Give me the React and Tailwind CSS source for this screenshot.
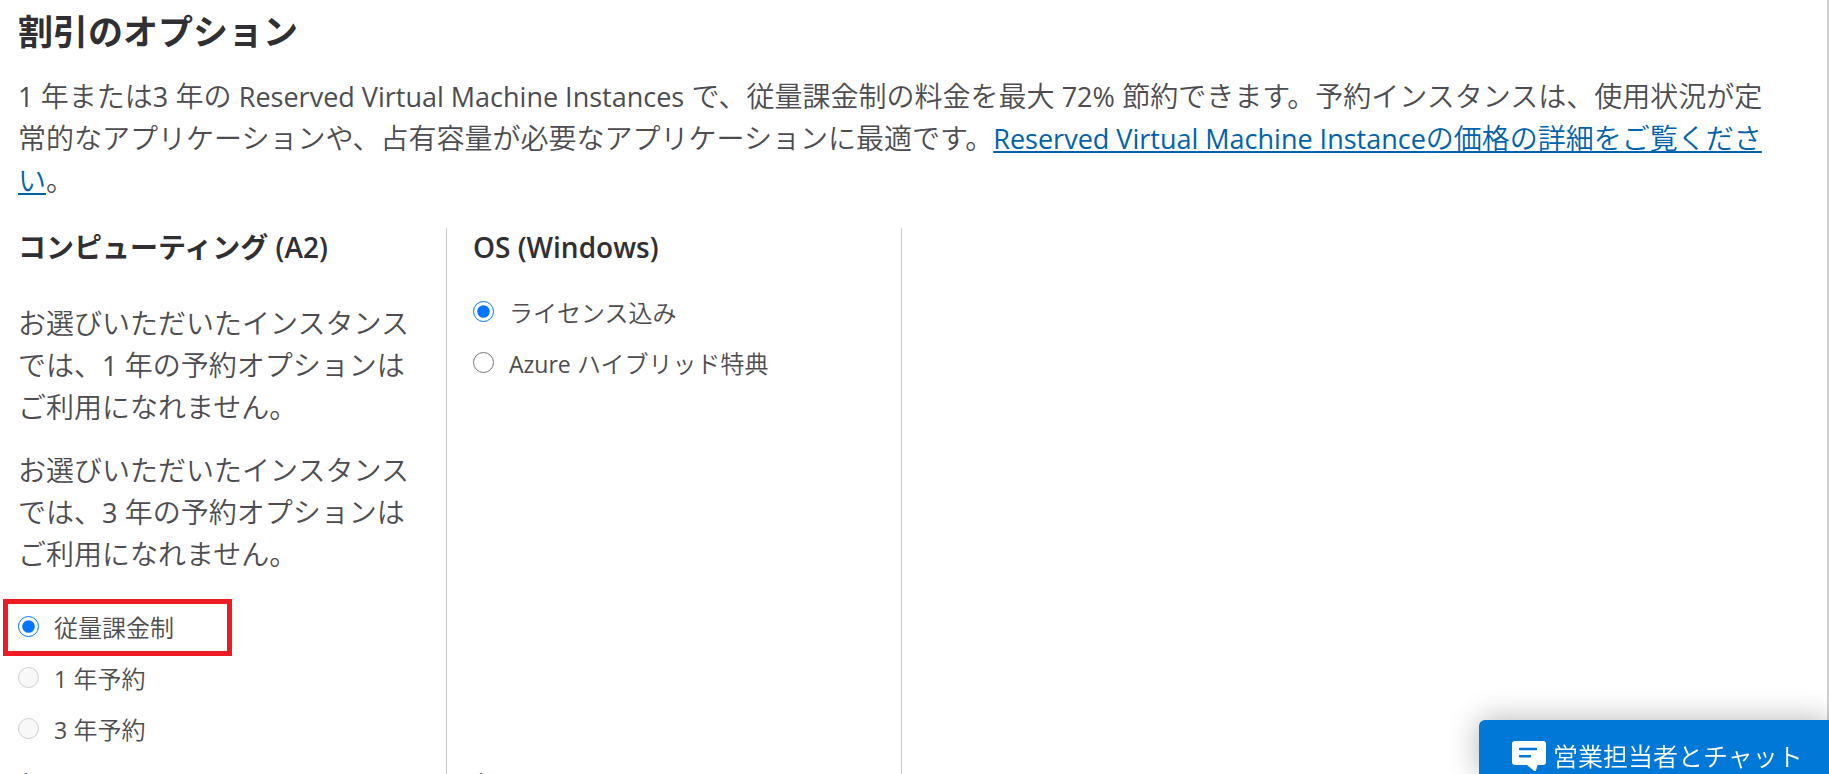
const bodyText = "text-[28px] leading-[42px] font-[350]";

/* Latin letters and digits are set a little smaller and heavier than the kana and kanji around them. */
function Mixed({ text, latin = "text-[27px] leading-none font-normal" }) {
  return text.split(/([A-Za-z0-9%]+(?: [A-Za-z0-9%]+)*)/).map((run, i) =>
    i % 2 ? (
      <span key={i} className={latin}>
        {run}
      </span>
    ) : (
      run
    ),
  );
}

function Option({ name, label, checked, disabled, highlighted }) {
  return (
    <li className="relative flex h-[51px] items-center">
      <label className="flex items-center gap-[15px] text-2xl font-[350]">
        <input
          type="radio"
          name={name}
          defaultChecked={checked}
          disabled={disabled}
          className="size-[21px]"
        />
        <span className="pt-0.5">
          <Mixed text={label} latin="text-[23px] leading-none font-normal" />
        </span>
      </label>
      {highlighted && (
        <span className="pointer-events-none absolute -top-0.5 -left-[15px] h-[57px] w-[229px] border-5 border-[#ed1c24]" />
      )}
    </li>
  );
}

function Column({ title, children }) {
  return (
    <section className="flex flex-col border-r border-[#c8c8c8] px-[26px]">
      <h3 className="text-[28px] leading-[38px] font-semibold text-[#2f2f34]">{title}</h3>
      {children}
      <p className="mt-auto h-3 shrink-0 text-[28px] leading-[42px] font-normal">$</p>
    </section>
  );
}

function ChatIcon() {
  return (
    <svg viewBox="0 0 34 30" className="h-[30px] w-[34px] shrink-0" aria-hidden="true">
      <path
        fill="#fff"
        d="M3 0h28a3 3 0 0 1 3 3v18a3 3 0 0 1-3 3h-5.500l-1.500 5.200a1 1 0 0 1-2 .5L15 24H3a3 3 0 0 1-3-3V3a3 3 0 0 1 3-3Z"
      />
      <path stroke="#0078d7" strokeWidth="2.4" strokeLinecap="round" d="M8 8h16M8 15.200h10" />
    </svg>
  );
}

export default function App() {
  return (
    <div
      lang="ja"
      className="h-screen overflow-hidden border-r-2 border-[#cfcfcf] bg-white font-['Open_Sans','Noto_Sans_CJK_JP',sans-serif] text-[#4c4c51]"
    >
      <main className="flex h-full flex-col pr-[15px] pl-[18px]">
        <h2 className="pt-[6px] text-[35px] leading-[52px] font-bold text-[#2f2f34]">割引のオプション</h2>
        <p className={`${bodyText} mt-[17px] pr-[46px]`}>
          <Mixed text="1 年または3 年の Reserved Virtual Machine Instances で、従量課金制の料金を最大 72% 節約できます。予約インスタンスは、使用状況が定常的なアプリケーションや、占有容量が必要なアプリケーションに最適です。" />
          <a href="#reserved" className="text-[#0062ad] underline decoration-2 underline-offset-2">
            <Mixed text="Reserved Virtual Machine Instanceの価格の詳細をご覧ください" />
          </a>
          。
        </p>
        <div className="mt-[27px] -ml-[26px] grid min-h-0 flex-1 grid-cols-4">
          <Column title="コンピューティング (A2)">
            <p className={`${bodyText} mt-[36px]`}>
              <Mixed text="お選びいただいたインスタンスでは、1 年の予約オプションはご利用になれません。" />
            </p>
            <p className={`${bodyText} mt-[21px]`}>
              <Mixed text="お選びいただいたインスタンスでは、3 年の予約オプションはご利用になれません。" />
            </p>
            <ul className="mt-[26px]">
              <Option name="compute" label="従量課金制" checked highlighted />
              <Option name="compute" label="1 年予約" disabled />
              <Option name="compute" label="3 年予約" disabled />
            </ul>
          </Column>
          <Column title="OS (Windows)">
            <ul className="mt-5">
              <Option name="os" label="ライセンス込み" checked />
              <Option name="os" label="Azure ハイブリッド特典" />
            </ul>
          </Column>
        </div>
      </main>
      <button
        type="button"
        className="fixed right-0 bottom-0 flex h-[54px] w-[350px] items-end gap-[7px] rounded-tl-md bg-[#0078d7] pb-[3px] pl-[33px] text-[25px] leading-[30px] font-[350] whitespace-nowrap text-white shadow-[0_0_30px_rgba(0,0,0,0.3)]"
      >
        <ChatIcon />
        営業担当者とチャット
      </button>
    </div>
  );
}
